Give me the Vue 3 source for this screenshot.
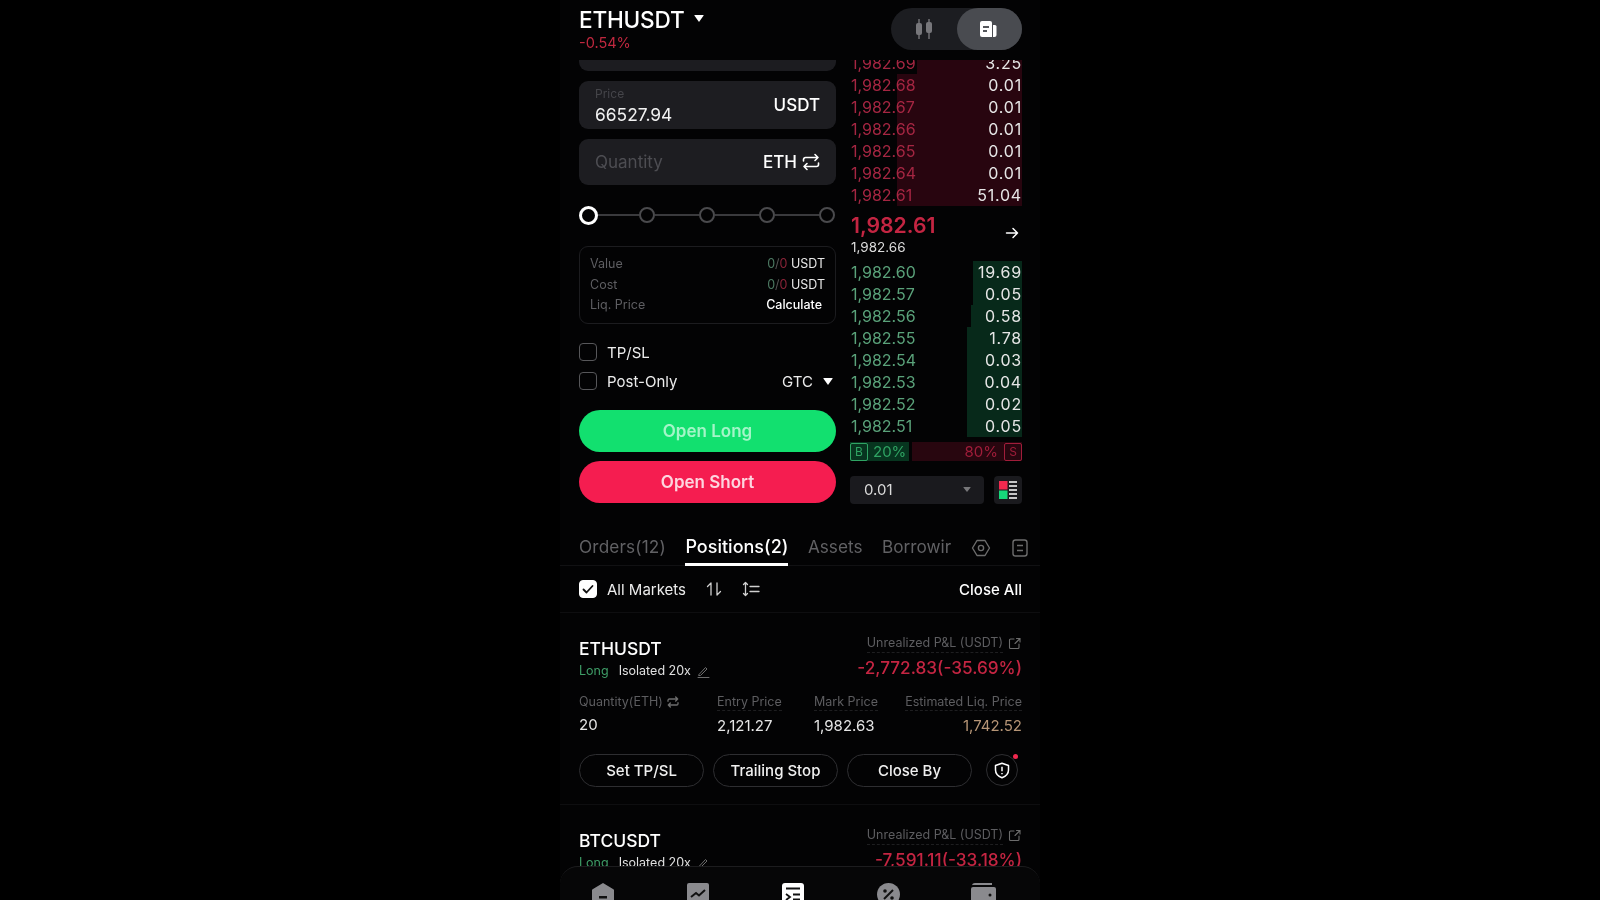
<script setup>
const asks = [
  { p: '1,982.69', q: '3.25', w: 105 },
  { p: '1,982.68', q: '0.01', w: 125 },
  { p: '1,982.67', q: '0.01', w: 125 },
  { p: '1,982.66', q: '0.01', w: 125 },
  { p: '1,982.65', q: '0.01', w: 125 },
  { p: '1,982.64', q: '0.01', w: 125 },
  { p: '1,982.61', q: '51.04', w: 125 }
]
const bids = [
  { p: '1,982.60', q: '19.69', w: 49 },
  { p: '1,982.57', q: '0.05', w: 49 },
  { p: '1,982.56', q: '0.58', w: 51 },
  { p: '1,982.55', q: '1.78', w: 55 },
  { p: '1,982.54', q: '0.03', w: 55 },
  { p: '1,982.53', q: '0.04', w: 55 },
  { p: '1,982.52', q: '0.02', w: 55 },
  { p: '1,982.51', q: '0.05', w: 55 }
]
</script>

<template>
  <div class="page">
    <div class="app">
      <header class="top">
        <div class="sym">
          <div class="sym-line"><span class="sym-name">ETHUSDT</span><i class="tri tri-big"></i></div>
          <div class="sym-chg">-0.54%</div>
        </div>
        <div class="toggle">
          <span class="tog-a">
            <svg width="20" height="22" viewBox="0 0 20 22" fill="#77777b"><rect x="2" y="5" width="6" height="12" rx="2"/><rect x="4.300" y="1" width="1.400" height="20"/><rect x="12" y="4" width="6" height="11" rx="2"/><rect x="14.300" y="1" width="1.400" height="20"/></svg>
          </span>
          <span class="tog-b">
            <svg width="20" height="20" viewBox="0 0 20 20"><path d="M2 4a2 2 0 0 1 2-2h8a2 2 0 0 1 2 2v14H4a2 2 0 0 1-2-2z" fill="#fff"/><path d="M15 6h2a1.500 1.500 0 0 1 1.500 1.500V16a2 2 0 0 1-2 2H15z" fill="#fff"/><path d="M5 8h6M5 12h4" stroke="#55575c" stroke-width="1.800"/></svg>
          </span>
        </div>
      </header>

      <main class="scroll">
        <section class="trade">
          <div class="form">
            <div class="stub"></div>
            <div class="field price">
              <div class="field-text"><span class="f-label">Price</span><span class="f-value">66527.94</span></div>
              <span class="f-unit">USDT</span>
            </div>
            <div class="field qty">
              <span class="f-ph">Quantity</span>
              <span class="f-unit">ETH
                <svg width="18" height="18" viewBox="0 0 18 18" fill="none" stroke="#fff" stroke-width="1.600" stroke-linecap="round" stroke-linejoin="round"><path d="M1.500 8V6.500a2 2 0 0 1 2-2H16M13 1.500l3 3-3 3M16.500 10v1.500a2 2 0 0 1-2 2H2M5 16.500l-3-3 3-3"/></svg>
              </span>
            </div>
            <div class="slider">
              <i class="node first"></i><b></b><i class="node"></i><b></b><i class="node"></i><b></b><i class="node"></i><b></b><i class="node"></i>
            </div>
            <div class="info">
              <div class="info-row"><span>Value</span><span class="val"><em class="g">0</em><em class="s">/</em><em class="r">0</em> USDT</span></div>
              <div class="info-row"><span>Cost</span><span class="val"><em class="g">0</em><em class="s">/</em><em class="r">0</em> USDT</span></div>
              <div class="info-row"><span>Liq. Price</span><span class="calc">Calculate</span></div>
            </div>
            <label class="check tp"><i class="box"></i>TP/SL</label>
            <div class="post">
              <label class="check"><i class="box"></i>Post-Only</label>
              <span class="gtc">GTC<i class="tri"></i></span>
            </div>
            <button class="cta long">Open Long</button>
            <button class="cta short">Open Short</button>
          </div>

          <div class="book">
            <div class="asks">
              <div v-for="a in asks" :key="a.p" class="row">
                <i class="depth red" :style="{ width: a.w + 'px' }"></i>
                <span class="bp red-t">{{ a.p }}</span><span class="bq">{{ a.q }}</span>
              </div>
            </div>
            <div class="mid">
              <div>
                <div class="mid-p">1,982.61</div>
                <div class="mid-s">1,982.66</div>
              </div>
              <svg width="14" height="14" viewBox="0 0 14 14" fill="none" stroke="#fff" stroke-width="1.500" stroke-linecap="round" stroke-linejoin="round"><path d="M1.500 7h11M8 2.500 12.500 7 8 11.500"/></svg>
            </div>
            <div class="bids">
              <div v-for="b in bids" :key="b.p" class="row">
                <i class="depth green" :style="{ width: b.w + 'px' }"></i>
                <span class="bp green-t">{{ b.p }}</span><span class="bq">{{ b.q }}</span>
              </div>
            </div>
            <div class="ratio">
              <div class="r-b"><span class="tag tag-b">B</span>20%</div>
              <div class="r-s">80%<span class="tag tag-s">S</span></div>
            </div>
            <div class="tools">
              <div class="select">0.01<i class="tri tri-dim"></i></div>
              <div class="layout">
                <svg width="18" height="18" viewBox="0 0 18 18"><rect x="0" y="0" width="8.500" height="8.500" fill="#f0294f"/><rect x="0" y="9.500" width="8.500" height="8.500" fill="#16d77a"/><path d="M10 1h8M10 5h8M10 9h8M10 13h8M10 17h8" stroke="#fff" stroke-width="1.600"/></svg>
              </div>
            </div>
          </div>
        </section>

        <nav class="tabs">
          <span class="tab orders">Orders(12)</span>
          <span class="tab on">Positions(2)</span>
          <span class="tab">Assets</span>
          <span class="tab cut">Borrowir</span>
          <span class="tab-icons">
            <svg width="20" height="20" viewBox="0 0 20 20" fill="none" stroke="#6d6d6d" stroke-width="1.400"><path d="M6 2.500h8l4.500 7.500-4.500 7.500H6L1.500 10z" stroke-linejoin="round"/><circle cx="10" cy="10" r="2.600"/></svg>
            <svg width="20" height="20" viewBox="0 0 20 20" fill="none" stroke="#6d6d6d" stroke-width="1.400"><rect x="3" y="2" width="14" height="16" rx="2.500"/><path d="M7 7.500h6M7 12.500h6"/></svg>
          </span>
        </nav>

        <div class="filter">
          <label class="check all"><i class="box on"><svg width="14" height="14" viewBox="0 0 14 14" fill="none" stroke="#111" stroke-width="1.800" stroke-linecap="round" stroke-linejoin="round"><path d="M2.500 7.500 5.500 10.500 11.500 4"/></svg></i>All Markets</label>
          <svg class="ico1" width="16" height="16" viewBox="0 0 16 16" fill="none" stroke="#d0d0d0" stroke-width="1.300" stroke-linecap="round" stroke-linejoin="round"><path d="M5 14V2L1.500 5.500M11 2v12l3.500-3.500"/></svg>
          <svg class="ico2" width="18" height="16" viewBox="0 0 18 16" fill="none" stroke="#d0d0d0" stroke-width="1.300" stroke-linecap="round" stroke-linejoin="round"><path d="M3.500 2v12M1.500 3.500l2-2 2 2M1.500 12.500l2 2 2-2M8 5.500h9M8 10.500h9"/></svg>
          <span class="close-all">Close All</span>
        </div>

        <article class="pos first-pos">
          <div class="pos-top">
            <div>
              <div class="pos-name">ETHUSDT</div>
              <div class="pos-meta"><span class="long-t">Long</span><span>Isolated 20x</span>
                <svg class="pencil" width="13" height="13" viewBox="0 0 13 13" fill="none" stroke="#6d6d6d" stroke-width="1" stroke-linecap="round"><path d="M2 9.500 8.500 2.500l1.500 1.500-6.500 6.500H2zM1 12.500h11"/></svg>
              </div>
            </div>
            <div class="pnl">
              <div class="pnl-l"><span class="dash">Unrealized P&amp;L (USDT)</span>
                <svg width="13" height="13" viewBox="0 0 13 13" fill="none" stroke="#6d6d6d" stroke-width="1.100" stroke-linecap="round"><path d="M6 2H2.500A1 1 0 0 0 1.500 3v7.500a1 1 0 0 0 1 1H10a1 1 0 0 0 1-1V7M7 6.500 12 1.500M8.500 1.500H12V5"/></svg>
              </div>
              <div class="pnl-v">-2,772.83(-35.69%)</div>
            </div>
          </div>
          <div class="stats">
            <div class="st st1"><div class="st-l">Quantity(ETH)
              <svg width="12" height="12" viewBox="0 0 18 18" fill="none" stroke="#6d6d6d" stroke-width="2" stroke-linecap="round" stroke-linejoin="round"><path d="M1.500 8V6.500a2 2 0 0 1 2-2H16M13 1.500l3 3-3 3M16.500 10v1.500a2 2 0 0 1-2 2H2M5 16.500l-3-3 3-3"/></svg>
            </div><div class="st-v q">20</div></div>
            <div class="st st2"><div class="st-l"><span class="dash">Entry Price</span></div><div class="st-v">2,121.27</div></div>
            <div class="st st3"><div class="st-l"><span class="dash">Mark Price</span></div><div class="st-v">1,982.63</div></div>
            <div class="st st4"><div class="st-l"><span class="dash">Estimated Liq. Price</span></div><div class="st-v liq">1,742.52</div></div>
          </div>
          <div class="acts">
            <button class="act">Set TP/SL</button>
            <button class="act">Trailing Stop</button>
            <button class="act">Close By</button>
            <span class="shield">
              <svg width="16" height="17" viewBox="0 0 16 17" fill="none" stroke="#fff" stroke-width="1.500" stroke-linejoin="round"><path d="M8 1.200 14.500 3.500V8c0 3.800-2.700 6.300-6.500 7.800C4.200 14.300 1.500 11.800 1.500 8V3.500z"/><path d="M8 4.800v4.400M8 11v1.200"/></svg>
              <i class="dot"></i>
            </span>
          </div>
        </article>

        <article class="pos">
          <div class="pos-top">
            <div>
              <div class="pos-name">BTCUSDT</div>
              <div class="pos-meta"><span class="long-t">Long</span><span>Isolated 20x</span>
                <svg class="pencil" width="13" height="13" viewBox="0 0 13 13" fill="none" stroke="#6d6d6d" stroke-width="1" stroke-linecap="round"><path d="M2 9.500 8.500 2.500l1.500 1.500-6.500 6.500H2zM1 12.500h11"/></svg>
              </div>
            </div>
            <div class="pnl">
              <div class="pnl-l"><span class="dash">Unrealized P&amp;L (USDT)</span>
                <svg width="13" height="13" viewBox="0 0 13 13" fill="none" stroke="#6d6d6d" stroke-width="1.100" stroke-linecap="round"><path d="M6 2H2.500A1 1 0 0 0 1.500 3v7.500a1 1 0 0 0 1 1H10a1 1 0 0 0 1-1V7M7 6.500 12 1.500M8.500 1.500H12V5"/></svg>
              </div>
              <div class="pnl-v">-7,591.11(-33.18%)</div>
            </div>
          </div>
        </article>
      </main>

      <footer class="nav">
        <svg width="22" height="30" viewBox="0 0 22 30"><path d="M11 0 21 6a1.500 1.500 0 0 1 1 1.500V30H0V7.500A1.500 1.500 0 0 1 1 6z" fill="#8a8a8e"/><rect x="7" y="13" width="8" height="2.500" fill="#111"/></svg>
        <svg width="22" height="30" viewBox="0 0 22 30"><rect width="22" height="30" rx="2" fill="#8a8a8e"/><path d="M4 14l5-4 3 2.500 6-5.500" fill="none" stroke="#111" stroke-width="2"/></svg>
        <svg width="22" height="30" viewBox="0 0 22 30"><rect width="22" height="30" rx="3" fill="#fff"/><path d="M4 5.500h14M4 11l4 3-4 3M11 11.500h7M11 16.500h7" fill="none" stroke="#111" stroke-width="1.800"/></svg>
        <svg width="23" height="30" viewBox="0 0 23 30"><circle cx="11.500" cy="11.500" r="11.500" fill="#8a8a8e"/><path d="M7 16 16 7" stroke="#111" stroke-width="2"/><circle cx="8" cy="8" r="1.800" fill="#111"/><circle cx="15" cy="15" r="1.800" fill="#111"/></svg>
        <svg class="wallet" width="25" height="30" viewBox="0 0 25 30"><path d="M1 3a3 3 0 0 1 3-3h17v2H1z" fill="#8a8a8e"/><rect y="4" width="25" height="26" rx="2" fill="#8a8a8e"/><circle cx="19" cy="12" r="1.500" fill="#111"/></svg>
      </footer>
    </div>
  </div>
</template>

<style>
html, body { margin: 0; background: #000; }
</style>

<style scoped>
* { box-sizing: border-box; }
em { font-style: normal; }
.page { width: 1600px; height: 900px; background: #000; font-family: Inter, "Noto Sans", sans-serif; color: #fff; overflow: hidden; }
.app { width: 480px; height: 900px; margin: 0 auto; display: flex; flex-direction: column; background: #030304; overflow: hidden; filter: blur(0.35px); }

.top { flex: 0 0 60px; display: flex; justify-content: space-between; padding: 8px 18px 0 19px; }
.sym { margin-top: -2px; }
.sym-line { display: flex; align-items: center; gap: 9px; height: 26px; }
.sym-name { font-size: 22.600px; font-weight: 500; letter-spacing: -0.2px; }
.sym-chg { font-size: 14.500px; color: #c0283f; margin-top: 2px; line-height: 18px; }
.tri { display: inline-block; width: 0; height: 0; border-left: 5px solid transparent; border-right: 5px solid transparent; border-top: 7px solid #fff; border-radius: 1px; }
.tri-big { margin-top: -1px; }
.toggle { width: 131px; height: 42px; border-radius: 21px; background: #1c1d21; display: flex; }
.tog-a, .tog-b { display: flex; align-items: center; justify-content: center; }
.tog-a { flex: 1; }
.tog-b { width: 65px; border-radius: 21px; background: #494b50; }
.tog-b svg { margin-right: 3px; }

.scroll { flex: 1; min-height: 0; overflow: hidden; }
.trade { display: flex; padding: 0 18px 0 19px; gap: 15px; }
.form { width: 257px; flex: none; }
.stub { height: 11px; background: #1c1c20; border-radius: 0 0 9px 9px; }
.field { background: #1d1d21; border-radius: 9px; display: flex; align-items: center; justify-content: space-between; padding: 0 16px; }
.price { height: 48px; margin-top: 10px; }
.qty { height: 46px; margin-top: 10px; }
.field-text { display: flex; flex-direction: column; padding-bottom: 2.500px; }
.f-label { font-size: 12px; color: #45454a; line-height: 14px; margin-top: 5.500px; }
.f-value { font-size: 17.400px; line-height: 22px; color: #f2f2f2; margin-top: 3.500px; }
.f-unit { display: flex; align-items: center; gap: 5px; font-size: 17px; font-weight: 500; color: #fff; }
.f-ph { font-size: 17px; color: #4d4d52; }
.slider { display: flex; align-items: center; margin-top: 20px; height: 20px; padding-right: 1.500px; }
.slider b { flex: 1; height: 2px; background: #3a3a3d; }
.node { width: 16px; height: 16px; border-radius: 50%; border: 2px solid #4a4a4d; flex: none; }
.node.first { width: 19px; height: 19px; border: 3px solid #fff; margin-right: -3px; position: relative; z-index: 1; background: #030304; }
.info { margin-top: 21px; height: 78px; border: 1px solid #1c1c1f; border-radius: 9px; padding: 7px 10px 6px; }
.info-row { display: flex; justify-content: space-between; font-size: 12.500px; line-height: 20.500px; color: #5e5e62; }
.val { color: #e8e8e8; }
.g { color: #4d7a63; } .s { color: #555; } .r { color: #8a2438; }
.calc { color: #fff; font-weight: 500; margin-right: 3px; }
.check { display: flex; align-items: center; gap: 10px; font-size: 15px; color: #ececec; }
.box { width: 18px; height: 18px; border: 1.500px solid #57575a; border-radius: 4px; display: flex; align-items: center; justify-content: center; flex: none; }
.box.on { background: #fff; border-color: #fff; }
.tp { margin-top: 19px; height: 18px; }
.post { margin-top: 11px; height: 18px; display: flex; align-items: center; justify-content: space-between; padding-right: 3px; }
.gtc { display: flex; align-items: center; gap: 10px; font-size: 15px; color: #ececec; margin-left: -1px; }
.cta { display: block; width: 100%; height: 42px; border: 0; border-radius: 21px; font-family: inherit; font-size: 17px; font-weight: 600; }
.long { margin-top: 20px; background: #12e06f; color: #a4f5c8; }
.short { margin-top: 9px; background: #f51d50; color: #fdd5df; }

.book { flex: 1; min-width: 0; }
.asks { height: 146px; overflow: hidden; }
.asks .row:first-child { margin-top: -8.500px; }
.row { position: relative; height: 22px; display: flex; justify-content: space-between; align-items: center; font-size: 16px; }
.depth { position: absolute; right: 0; top: 0; bottom: 0; }
.depth.red { background: #28050f; }
.depth.green { background: #07291a; }
.bp, .bq { position: relative; }
.bq { letter-spacing: 0.8px; color: #e6e6e6; }
.red-t { color: #a52642; }
.green-t { color: #5aa27a; }
.mid { height: 54px; margin-bottom: 1px; display: flex; justify-content: space-between; align-items: center; padding-right: 3px; }
.mid-p { font-size: 21.200px; font-weight: 600; color: #c42542; line-height: 26px; margin-top: 1px; }
.mid-s { font-size: 13.500px; color: #dcdcdc; line-height: 16px; margin-top: 1px; }
.bids { height: 176px; }
.ratio { display: flex; justify-content: space-between; gap: 3px; height: 19px; margin: 5px 0 0 -1px; font-size: 15px; }
.r-b { width: 59px; background: #07351f; color: #2fa463; display: flex; align-items: center; gap: 5px; }
.r-s { flex: 1; background: #28060f; color: #a01d3a; display: flex; align-items: center; justify-content: flex-end; gap: 6px; }
.tag { width: 18px; height: 18px; font-size: 12px; display: flex; align-items: center; justify-content: center; border-radius: 2px; border: 1px solid currentColor; }
.tools { display: flex; justify-content: space-between; margin: 15px 0 0 -1px; }
.select { width: 134px; height: 28px; background: #1a1a1e; border-radius: 4px; padding: 0 13px 1px 14px; display: flex; align-items: center; justify-content: space-between; font-size: 15px; color: #dcdcdc; }
.tri-dim { border-left-width: 4px; border-right-width: 4px; border-top-width: 5px; border-top-color: #77777a; }
.layout { width: 28px; height: 28px; background: #1a1a1e; border-radius: 4px; display: flex; align-items: center; justify-content: center; }

.tabs { display: flex; align-items: flex-start; gap: 19.500px; margin-top: 29px; padding: 0 18px 0 19px; height: 33px; border-bottom: 1px solid #111113; font-size: 17.200px; color: #616164; }
.tab { height: 33px; line-height: 27px; white-space: nowrap; }
.orders { letter-spacing: 0.15px; }
.tab.on { color: #fff; font-size: 18px; font-weight: 500; border-bottom: 3px solid #fff; }
.cut { width: 69px; overflow: hidden; }
.tab-icons { margin-left: auto; display: flex; gap: 19px; padding-top: 5px; margin-right: -8px; }

.filter { display: flex; align-items: center; height: 47px; padding: 0 18px 0 19px; border-bottom: 1px solid #0e0e10; }
.ico1, .ico2 { margin-left: 20px; }
.close-all { margin-left: auto; font-size: 15px; font-weight: 500; }

.pos { padding: 25px 18px 0 19px; }
.first-pos { height: 192px; border-bottom: 1px solid #0e0e10; }
.pos-top { display: flex; justify-content: space-between; align-items: flex-start; }
.pos-name { font-size: 17.500px; font-weight: 500; line-height: 22px; }
.pos-meta { display: flex; align-items: center; gap: 10px; font-size: 12.500px; color: #e0e0e0; margin-top: 1px; line-height: 20px; }
.pencil { margin-left: -4px; }
.long-t { color: #3f9e68; }
.pnl { text-align: right; margin-top: -4px; }
.pnl-l { display: flex; justify-content: flex-end; align-items: center; gap: 5px; padding-right: 1px; font-size: 12.500px; color: #5d5d60; line-height: 18px; }
.pnl-v { font-size: 17.200px; font-weight: 500; color: #c42542; line-height: 24px; margin-top: 3px; }
.dash { border-bottom: 1px dashed #1e1e20; }
.stats { display: flex; margin-top: 12px; }
.st-l { font-size: 12.500px; color: #5d5d60; line-height: 17px; height: 17px; display: flex; align-items: center; gap: 4px; white-space: nowrap; }
.st-v { font-size: 15px; color: #e6e6e6; line-height: 20px; margin-top: 6px; }
.st-v.q { margin-top: 5px; }
.st1 { flex: none; width: 138px; } .st2 { flex: none; width: 97px; } .st3 { flex: none; width: 97px; }
.st4 { flex: 1; min-width: 0; text-align: right; }
.st4 .st-l { justify-content: flex-end; }
.liq { color: #b69576; }
.acts { display: flex; align-items: center; gap: 9px; margin-top: 17.500px; }
.act { width: 125px; height: 33px; background: transparent; border: 1.500px solid #2e2e31; border-radius: 17px; color: #f0f0f0; font-family: inherit; font-size: 15px; font-weight: 500; padding: 0; }
.shield { position: relative; width: 32px; height: 32px; margin-left: 5px; border: 1.500px solid #2e2e31; border-radius: 50%; display: flex; align-items: center; justify-content: center; }
.dot { position: absolute; right: -1px; top: -1px; width: 5px; height: 5px; border-radius: 50%; background: #f0294f; }

.nav { flex: 0 0 34px; background: #060607; border-top: 1px solid #1c1c1e; border-radius: 18px 18px 0 0; display: flex; gap: 73px; padding: 16px 0 0 32px; overflow: hidden; margin-top: -1px; position: relative; }
.nav svg { flex: none; }
.wallet { margin-left: -2px; }
</style>
